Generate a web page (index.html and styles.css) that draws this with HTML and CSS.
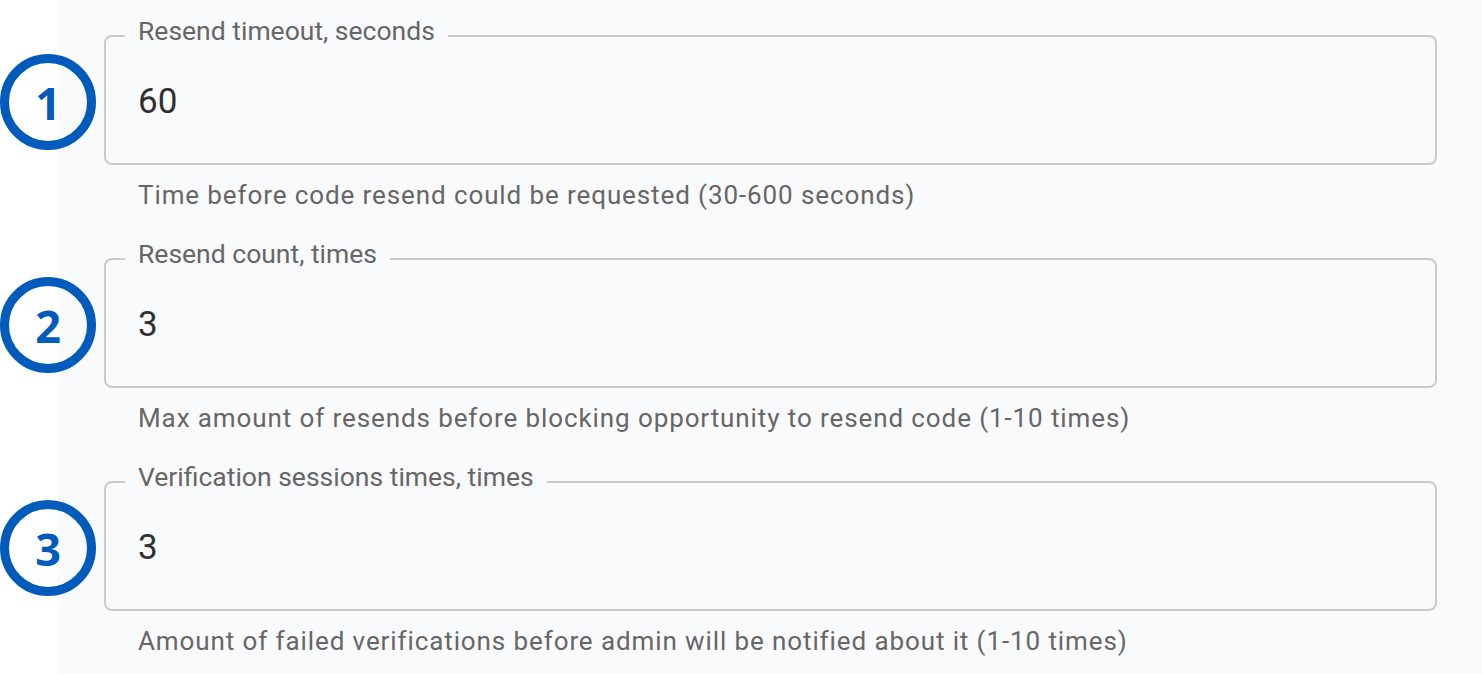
FILE: index.html
```html
<!DOCTYPE html>
<html lang="en">
<head>
  <meta charset="UTF-8" />
  <meta name="viewport" content="width=device-width, initial-scale=1.0"/>
  <title>Verification settings</title>
  <link rel="stylesheet" href="styles.css">
</head>
<body>

  <!-- SETTINGS PANEL -->
  <div class="panel">

    <div class="row">
      <div class="step">1</div>
      <div class="field">
        <fieldset class="box">
          <legend>Resend timeout, seconds</legend>
          <div class="value">60</div>
        </fieldset>
        <p class="helper">Time before code resend could be requested (30-600 seconds)</p>
      </div>
    </div>

    <div class="row">
      <div class="step">2</div>
      <div class="field">
        <fieldset class="box">
          <legend>Resend count, times</legend>
          <div class="value">3</div>
        </fieldset>
        <p class="helper">Max amount of resends before blocking opportunity to resend code (1-10 times)</p>
      </div>
    </div>

    <div class="row">
      <div class="step">3</div>
      <div class="field">
        <fieldset class="box">
          <legend>Verification sessions times, times</legend>
          <div class="value">3</div>
        </fieldset>
        <p class="helper">Amount of failed verifications before admin will be notified about it (1-10 times)</p>
      </div>
    </div>

  </div>

</body>
</html>
```

FILE: styles.css
```css
* {
  box-sizing: border-box;
  margin: 0;
  padding: 0;
}

body {
  font-family: Roboto, "Liberation Sans", sans-serif;
  background: #fff;
  height: 100vh;
  overflow: hidden;
}

.panel {
  margin-left: 58px;
  min-height: 100vh;
  background-color: #f9fafc;
  padding: 16px 45px 0 0;
}

.row {
  display: flex;
  align-items: flex-start;
  gap: 8px;
  margin-left: -58px;
  margin-bottom: 24px;
}

.step {
  flex: none;
  width: 96px;
  height: 96px;
  margin-top: 38px;
  border: 9px solid #005bbb;
  border-radius: 50%;
  display: flex;
  align-items: center;
  justify-content: center;
  font-family: "Open Sans", sans-serif;
  font-weight: 700;
  font-size: 45px;
  color: #005bbb;
}

.field {
  flex: 1;
}

.box {
  border: 2px solid #c9cacc;
  border-radius: 8px;
  padding: 0 0 16px 32px;
}

.box legend {
  font-size: 26.5px;
  line-height: 30px;
  padding: 0 13px 10px;
  margin-left: -13px;
  color: #666;
}

.value {
  font-size: 35px;
  line-height: 91px;
  color: #303030;
}

.helper {
  margin-top: 10px;
  padding-left: 34px;
  font-size: 26px;
  line-height: 40px;
  letter-spacing: 0.9px;
  color: #666;
}
```
